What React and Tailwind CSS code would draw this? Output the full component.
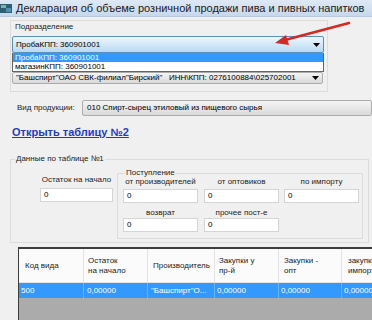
import React from 'react';

const Arrow = () => (
  <svg width="7" height="4" viewBox="0 0 7 4" className="shrink-0">
    <polygon points="0,0 7,0 3.5,4" fill="#000" />
  </svg>
);

const Field = ({ label, gap = 'mt-[4px]', className = '' }) => (
  <div className={`flex flex-col items-center w-[75px] ${className}`}>
    <div className="text-[8px] leading-[9px] whitespace-nowrap text-[#222]">{label}</div>
    <div className={`${gap} w-full h-[14px] bg-white border border-[#d5d5d5] text-[8px] leading-[12px] pl-[3px]`}>0</div>
  </div>
);

const columns = [
  { w: 'w-[65px]', head: <>Код вида</>, cell: '500', pl: 'pl-[6px]', cpl: 'pl-[2px]' },
  { w: 'w-[64px]', head: <>Остаток<br />на начало</>, cell: '0,00000', pl: 'pl-[4px]', cpl: 'pl-[3px]' },
  { w: 'w-[67px]', head: <>Производитель</>, cell: '"Башспирт"О...', pl: 'pl-[5px]', cpl: 'pl-[3px]' },
  { w: 'w-[64px]', head: <>Закупки у<br />пр-й</>, cell: '0,00000', pl: 'pl-[4px]', cpl: 'pl-[2px]' },
  { w: 'w-[63px]', head: <>Закупки -<br />опт</>, cell: '0,00000', pl: 'pl-[5px]', cpl: 'pl-[2px]' },
  { w: 'w-[64px]', head: <>закупки<br />импорт</>, cell: '0,00000', pl: 'pl-[6px]', cpl: 'pl-[2px]' },
];

export default function App() {
  return (
    <div className="relative w-[372px] h-[320px] overflow-hidden bg-[#f0f0f0] font-['Liberation_Sans',Arial,sans-serif] text-black">
      {/* title bar */}
      <div className="h-[17px] flex items-center bg-gradient-to-b from-[#dfe9f5] to-[#c7d8eb] border-b border-[#b9c9db]">
        <svg width="12" height="9" viewBox="0 0 12 9" className="shrink-0">
          <rect x="0" y="0" width="12" height="9" fill="#2f5f73" />
          <rect x="1" y="1" width="5" height="3" fill="#7fb3a0" />
          <rect x="6" y="4" width="5" height="4" fill="#4f8fb0" />
        </svg>
        <span className="ml-[4px] text-[11px] whitespace-nowrap text-[#1a1a1a]">
          Декларация об объеме розничной продажи пива и пивных напитков
        </span>
      </div>

      {/* Подразделение */}
      <div className="mt-[3px] ml-[10px] w-[318px] h-[72px] border border-[#dcdcdc]">
        <div className="pl-[4px] pt-[1px] text-[8px] leading-[10px] text-[#222]">Подразделение</div>
        <div className="mt-[4px] ml-[1px] w-[312px] h-[17px] flex items-center justify-between px-[3px] border border-[#5a8fba] rounded-[2px] bg-gradient-to-b from-[#eef6fd] to-[#b8daf2]">
          <span className="text-[8px] leading-[10px]">ПробаКПП: 360901001</span>
          <Arrow />
        </div>
        <div className="ml-[1px] w-[312px] border-x border-b border-[#646464] bg-white text-[8px] leading-[9px]">
          <div className="h-[9px] bg-[#3399ff] text-white pl-[2px]">ПробаКПП: 360901001</div>
          <div className="h-[9px] pl-[2px]">магазинКПП: 360901001</div>
        </div>
        <div className="ml-[1px] w-[311px] h-[12px] flex items-center justify-between px-[3px] border border-[#acacac] rounded-[2px] bg-gradient-to-b from-[#f4f4f4] to-[#d9d9d9]">
          <span className="text-[8px] leading-[10px] whitespace-nowrap">
            "Башспирт"ОАО СВК-филиал"Бирский"&nbsp;&nbsp;&nbsp;ИНН\КПП: 0276100884\025702001
          </span>
          <Arrow />
        </div>
      </div>

      {/* Вид продукции */}
      <div className="mt-[8px] h-[16px] flex items-center">
        <span className="ml-[17px] w-[82px] text-[8px] leading-[10px] text-[#222]">Вид продукции:</span>
        <div className="w-[290px] h-[16px] shrink-0 flex items-center pl-[4px] border border-[#acacac] rounded-[2px] bg-gradient-to-b from-[#f4f4f4] to-[#dadada]">
          <span className="text-[8px] leading-[10px] whitespace-nowrap">010 Спирт-сырец этиловый из пищевого сырья</span>
        </div>
      </div>

      <div className="mt-[10px] ml-[12px] text-[11px] leading-[13px] font-bold underline text-[#1f3cc4]">
        Открыть таблицу №2
      </div>

      {/* Данные по таблице №1 */}
      <fieldset className="mt-[15px] ml-[10px] w-[359px] border border-[#dcdcdc] pb-[3px]">
        <legend className="ml-[4px] px-[1px] text-[8px] leading-[10px] text-[#222]">Данные по таблице №1</legend>
        <div className="flex">
          <div className="ml-[29px] mt-[11px] w-[73px] flex flex-col items-center">
            <div className="text-[8px] leading-[10px] whitespace-nowrap text-[#222]">Остаток на начало</div>
            <div className="mt-[3px] w-full h-[14px] bg-white border border-[#d5d5d5] text-[8px] leading-[12px] pl-[3px]">0</div>
          </div>
          <fieldset className="ml-[4px] mt-[5px] w-[246px] border border-[#dcdcdc] pb-[6px]">
            <legend className="ml-[7px] px-[1px] text-[8px] leading-[8px] text-[#222]">Поступление</legend>
            <div className="flex">
              <Field label="от производителей" gap="mt-[3px]" className="ml-[5px]" />
              <Field label="от оптовиков" gap="mt-[3px]" className="ml-[6px]" />
              <Field label="по импорту" gap="mt-[3px]" className="ml-[5px]" />
            </div>
            <div className="flex mt-[5px]">
              <Field label="возврат" gap="mt-[1px]" className="ml-[5px]" />
              <Field label="прочее пост-е" gap="mt-[1px]" className="ml-[6px]" />
            </div>
          </fieldset>
        </div>
      </fieldset>

      {/* table */}
      <div className="mt-[4px] ml-[18px] w-[400px] border-t-2 border-l border-[#3d3d3d]">
        <div className="flex h-[34px] bg-[#fbfbfb] border-b border-[#e3e3e3]">
          {columns.map((c, i) => (
            <div key={i} className={`${c.w} ${c.pl} shrink-0 flex items-center border-r border-[#e3e3e3] text-[8px] leading-[10px] text-[#222] whitespace-nowrap overflow-hidden`}>
              <span>{c.head}</span>
            </div>
          ))}
        </div>
        <div className="flex h-[15px] bg-[#3399ff]">
          {columns.map((c, i) => (
            <div key={i} className={`${c.w} ${c.cpl} shrink-0 flex items-center border-r border-[#6ab4ff] text-[8px] leading-[10px] text-white whitespace-nowrap overflow-hidden`}>
              {c.cell}
            </div>
          ))}
        </div>
        <div className="h-[40px] bg-[#ababab]" />
      </div>

      {/* red arrow annotation */}
      <svg className="absolute left-0 top-0 pointer-events-none" width="372" height="60" viewBox="0 0 372 60">
        <line x1="349" y1="23" x2="283" y2="40.5" stroke="#d42a24" strokeWidth="2.5" strokeLinecap="round" />
        <polygon points="275,43 286,35 289,45" fill="#d42a24" />
      </svg>
    </div>
  );
}
